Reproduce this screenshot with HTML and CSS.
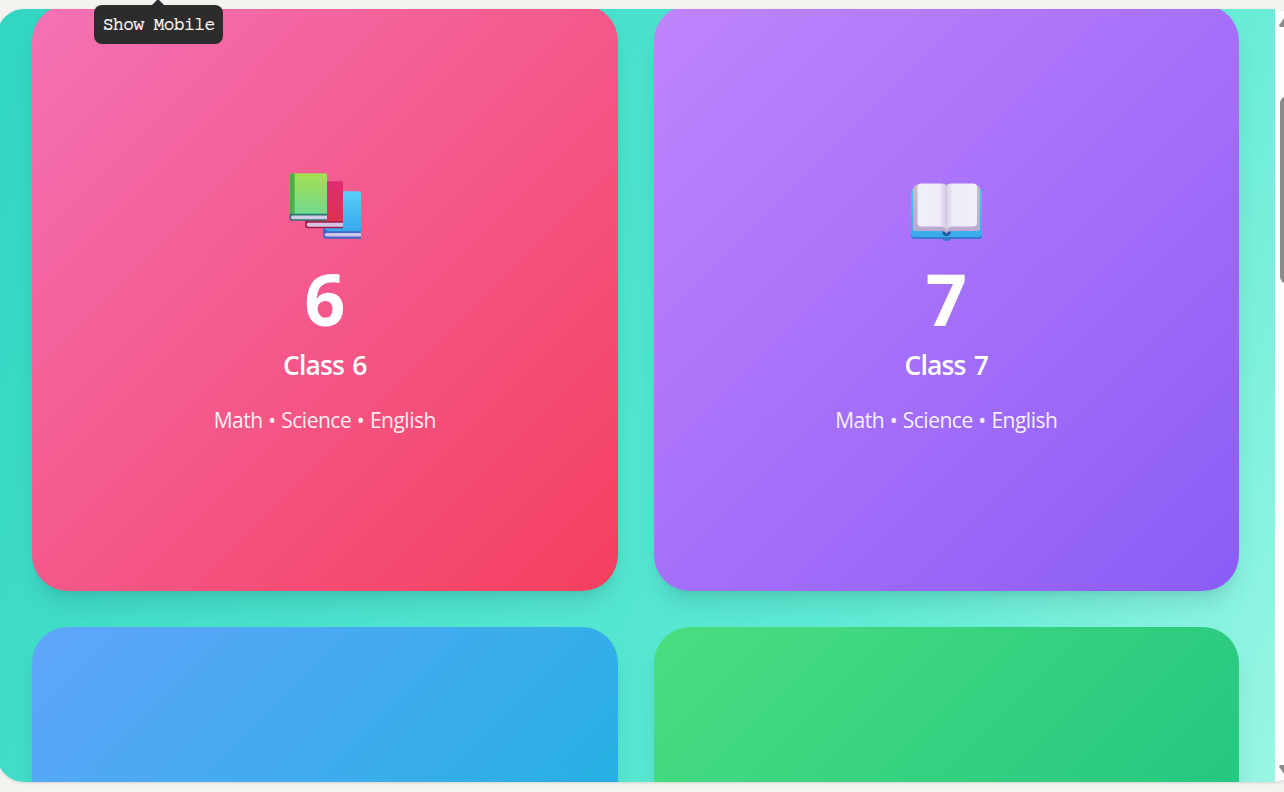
FILE: index.html
```html
<!DOCTYPE html>
<html lang="en">
<head>
<meta charset="utf-8">
<title>Classes</title>
<link rel="stylesheet" href="styles.css">
</head>
<body>
<main class="frame">
  <section class="viewport">
    <div class="grid">
      <article class="card pink">
        <svg class="emoji" viewBox="0 0 72 72" aria-hidden="true">
          <defs>
            <linearGradient id="green" x1="0" y1="0" x2="0" y2="1"><stop stop-color="#a6df50"/><stop offset="1" stop-color="#6fd991"/></linearGradient>
            <linearGradient id="red" x1="0" y1="0" x2="0" y2="1"><stop stop-color="#df2c72"/><stop offset="1" stop-color="#df3149"/></linearGradient>
            <linearGradient id="blue" x1="0" y1="0" x2="0" y2="1"><stop stop-color="#58cef7"/><stop offset="1" stop-color="#33a6ed"/></linearGradient>
          </defs>
          <g transform="translate(.6 .2)">
          <path d="M34 24q0-3 3-3h32.500q2 0 2 2v42H34z" fill="url(#blue)"/>
          <path d="M34 57l4 4h33.400v7.500H36.500q-3 0-3-3V60z" fill="#4166c8"/>
          <path d="M71.400 62.800H37q-2 0-2 1.800t2 1.700h34.400z" fill="#d2c7e8"/>
          <path d="M16 14q0-3 3-3h32.400q2 0 2 2v42H16z" fill="url(#red)"/>
          <path d="M16 47l3 4h34.400v7H18.500q-3 0-3-3z" fill="#a31a4b"/>
          <path d="M53.400 52.500H19q-2 0-2 2t2 2h34.400z" fill="#d5c4e3"/>
          <path d="M0 6q0-3 3-3h32.400q2 0 2 2v40H0z" fill="url(#green)"/>
          <path d="M0 6q0-3 3-3h2v42H0z" fill="#4bad45"/>
          <path d="M0 43.500h37.400v7H3q-3 0-3-3z" fill="#287371"/>
          <path d="M37.400 45.300H3q-1.500 0-1.500 1.800T3 49h34.400z" fill="#d2cbe5"/>
          </g>
        </svg>
        <div class="number">6</div>
        <h2 class="title">Class 6</h2>
        <p class="subjects">Math • Science • English</p>
      </article>
      <article class="card purple">
        <svg class="emoji" viewBox="0 0 72 72" aria-hidden="true">
          <defs>
            <linearGradient id="cover" x1="0" y1="0" x2="0" y2="1"><stop stop-color="#48c4f5"/><stop offset="1" stop-color="#3aa9eb"/></linearGradient>
            <linearGradient id="pageLeft"><stop stop-color="#f2eff9"/><stop offset=".75" stop-color="#eeebf7"/><stop offset="1" stop-color="#d3c9e3"/></linearGradient>
            <linearGradient id="pageRight"><stop stop-color="#d9d0e7"/><stop offset=".2" stop-color="#eeeaf7"/><stop offset="1" stop-color="#f2eff9"/></linearGradient>
            <linearGradient id="edge" x1="0" y1="0" x2="0" y2="1"><stop stop-color="#c3bec9"/><stop offset="1" stop-color="#b8a9d1"/></linearGradient>
          </defs>
          <path d="M1 23q0-3 3-3h65q3 0 3 3v43q0 3-3 3H41q-1 2-4.500 2T32 69H4q-3 0-3-3z" fill="#347bd0"/>
          <path d="M1 22q0-3 3-3h65q3 0 3 3v42q0 3-3 3H4q-3 0-3-3z" fill="url(#cover)"/>
          <path d="M32.500 61h8v2.500q-1 2.500-4 2.500t-4-2.500z" fill="#2457a5"/>
          <path d="M3 20q0-4 4-5.500h59q4 1.500 4 5.500v39q0 2-2 2H41q-3 0-4.500 2.500Q35 61 32 61H5q-2 0-2-2z" fill="url(#edge)"/>
          <path d="M7.500 17q0-3.500 4-3.500h20q4.500 0 5 4V61q-1-4.500-5-4.500h-20q-4 0-4-3.500z" fill="url(#pageLeft)"/>
          <path d="M36.500 17.500q.5-4 4.500-4h22q4 0 4 3.500v36q0 3.500-4 3.500H42q-4 0-5.500 4.500z" fill="url(#pageRight)"/>
        </svg>
        <div class="number">7</div>
        <h2 class="title">Class 7</h2>
        <p class="subjects">Math • Science • English</p>
      </article>
      <article class="card blue"></article>
      <article class="card green"></article>
    </div>
  </section>
  <aside class="scrollbar">
    <span class="arrow up"></span>
    <span class="thumb"></span>
    <span class="arrow down"></span>
  </aside>
</main>
<div class="tooltip">Show Mobile</div>
</body>
</html>
```
FILE: styles.css
```css
* { box-sizing: border-box; }

body {
  margin: 0;
  height: 792px;
  padding-top: 9px;
  overflow: hidden;
  background: #f5f3ef;
  font-family: "Open Sans", "Noto Sans", sans-serif;
}

.frame {
  display: flex;
  width: 1303px;
  height: 773px;
  margin-left: -3px;
  border-radius: 27px;
  overflow: hidden;
  background: #fdfdfd;
  box-shadow: 0 1px 3px rgba(0, 0, 0, 0.14);
}

.viewport {
  width: 1278px;
  height: 773px;
  overflow: hidden;
  background: linear-gradient(116.57deg, #32d6c2, #5eead4 70%, #99f6e4);
}

.grid {
  display: grid;
  grid-template-columns: 585.5px 585.5px;
  grid-auto-rows: 586px;
  gap: 36px;
  margin: -4px 0 0 35px;
}

.card {
  display: flex;
  flex-direction: column;
  align-items: center;
  padding-top: 165px;
  border-radius: 36px;
  color: #fff;
  box-shadow: 0 15px 22.5px -4.5px rgba(0, 0, 0, 0.1), 0 6px 9px -6px rgba(0, 0, 0, 0.1);
}

.pink { background: linear-gradient(135deg, #f472b6, #f43f5e); }
.purple { background: linear-gradient(135deg, #c084fc, #8b5cf6); }
.blue { background: linear-gradient(135deg, #60a5fa, #06b6d4); }
.green { background: linear-gradient(135deg, #4ade80, #10b981); }

.emoji {
  width: 72px;
  height: 72px;
}

.number {
  margin-top: 20px;
  font-size: 72px;
  font-weight: 700;
  line-height: 72px;
}

.title {
  margin: 10px 0 0;
  font-size: 26.5px;
  font-weight: 650;
  line-height: 42px;
  letter-spacing: -0.85px;
  word-spacing: 2px;
}

.subjects {
  margin: 19px 0 0;
  font-size: 21px;
  font-weight: 430;
  line-height: 30px;
  letter-spacing: -0.5px;
  word-spacing: 0.7px;
  white-space: nowrap;
  opacity: 0.9;
}

.scrollbar {
  display: flex;
  flex-direction: column;
  align-items: center;
  width: 25px;
  padding: 4px 0 3px;
}

.arrow {
  width: 17px;
  height: 14px;
  background: #8b8b8b;
}

.up { clip-path: polygon(50% 0, 100% 88%, 95% 100%, 5% 100%, 0 88%); }
.down { margin-top: auto; clip-path: polygon(5% 0, 95% 0, 100% 12%, 50% 100%, 0 12%); }

.thumb {
  width: 15px;
  height: 188px;
  margin-top: 69px;
  border-radius: 8px;
  background: #8b8b8b;
}

.tooltip {
  position: absolute;
  top: 5px;
  left: 94px;
  width: 129px;
  height: 39px;
  border-radius: 8px;
  background: #2c2c2c;
  color: #f5f3ef;
  font: 18.5px/43px "Courier Prime", "Liberation Mono", monospace;
  letter-spacing: -0.95px;
  text-align: center;
}

.tooltip::before {
  content: "";
  position: absolute;
  top: -6px;
  left: 57px;
  border: 7px solid transparent;
  border-top: 0;
  border-bottom-color: #2c2c2c;
}
```
